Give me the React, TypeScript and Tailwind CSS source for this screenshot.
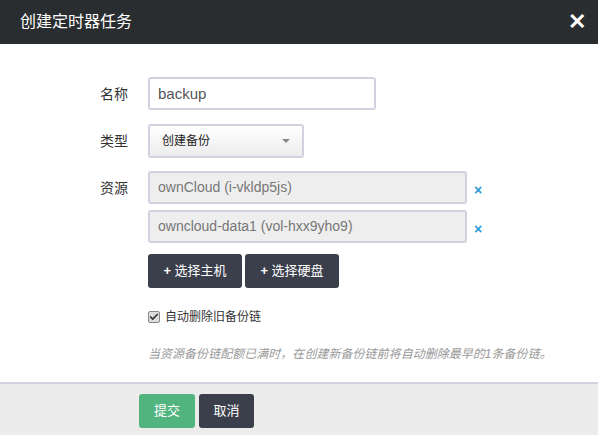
import { Check } from "lucide-react";

const font = { fontFamily: '"Liberation Sans", "Noto Sans CJK SC", sans-serif' };

function Row({ label, children, className = "" }: { label: string; children: React.ReactNode; className?: string }) {
  return (
    <div className={`flex ${className}`}>
      <div className="w-[128px] shrink-0 pr-0 pt-[7px] text-right text-[14px] text-[#333]">{label}</div>
      <div className="ml-[20px] flex flex-col">{children}</div>
    </div>
  );
}

function Resource({ text }: { text: string }) {
  return (
    <div className="flex items-center">
      <div className="flex h-[33px] w-[319px] items-center rounded-[3px] border-2 border-[#d3d1e0] bg-[#eeeeee] px-[8px] text-[14px] text-[#777]">
        {text}
      </div>
      <span className="ml-[7px] mt-[4px] text-[14px] font-bold leading-none text-[#2a9ad8]">×</span>
    </div>
  );
}

export default function App() {
  return (
    <div className="h-[435px] w-[598px] overflow-hidden bg-white" style={font}>
      <div className="flex h-[44px] items-center justify-between bg-[#2a2d2f] pl-[20px] pr-[12px]">
        <h1 className="text-[16px] text-white">创建定时器任务</h1>
        <span className="text-[22px] font-bold leading-none text-white">✕</span>
      </div>

      <div className="h-[338px] pt-[33px]">
        <Row label="名称">
          <input
            readOnly
            value="backup"
            className="h-[33px] w-[228px] rounded-[3px] border-2 border-[#d3d1e0] bg-white px-[8px] text-[15px] text-[#555] outline-none"
          />
        </Row>

        <Row label="类型" className="mt-[14px]">
          <div className="flex h-[34px] w-[156px] items-center justify-between rounded-[3px] border-2 border-[#d3d1e0] bg-gradient-to-b from-white to-[#ececec] pl-[12px] pr-[12px] text-[12px] text-[#222]">
            <span>创建备份</span>
            <span className="h-0 w-0 border-x-[4px] border-t-[4px] border-x-transparent border-t-[#888]" />
          </div>
        </Row>

        <Row label="资源" className="mt-[13px]">
          <div className="flex flex-col gap-[6px]">
            <Resource text="ownCloud (i-vkldp5js)" />
            <Resource text="owncloud-data1 (vol-hxx9yho9)" />
          </div>
          <div className="mt-[11px] flex gap-[3px]">
            <button className="h-[34px] w-[94px] rounded-[3px] bg-[#3b3e4b] text-[13px] text-white"><b>+</b> 选择主机</button>
            <button className="h-[34px] w-[94px] rounded-[3px] bg-[#3b3e4b] text-[13px] text-white"><b>+</b> 选择硬盘</button>
          </div>
          <div className="mt-[20px] flex items-center gap-[5px] text-[12px] text-[#333]">
            <span className="flex h-[12px] w-[12px] items-center justify-center rounded-[2px] border border-[#888] bg-[#ddd]">
              <Check className="h-[10px] w-[10px] text-[#333]" strokeWidth={4} />
            </span>
            <span>自动删除旧备份链</span>
          </div>
          <p className="mt-[19px] whitespace-nowrap text-[12px] italic tracking-[0.03px] text-[#999]">
            当资源备份链配额已满时，在创建新备份链前将自动删除最早的1条备份链。
          </p>
        </Row>
      </div>

      <div className="flex h-[53px] gap-[4px] border-t-2 border-[#d3d1e0] bg-[#ececec] pl-[139px] pt-[10px]">
        <button className="h-[34px] w-[56px] rounded-[3px] bg-[#52b47f] text-[13px] text-white">提交</button>
        <button className="h-[34px] w-[55px] rounded-[3px] bg-[#3b3e4b] text-[13px] text-white">取消</button>
      </div>
    </div>
  );
}
